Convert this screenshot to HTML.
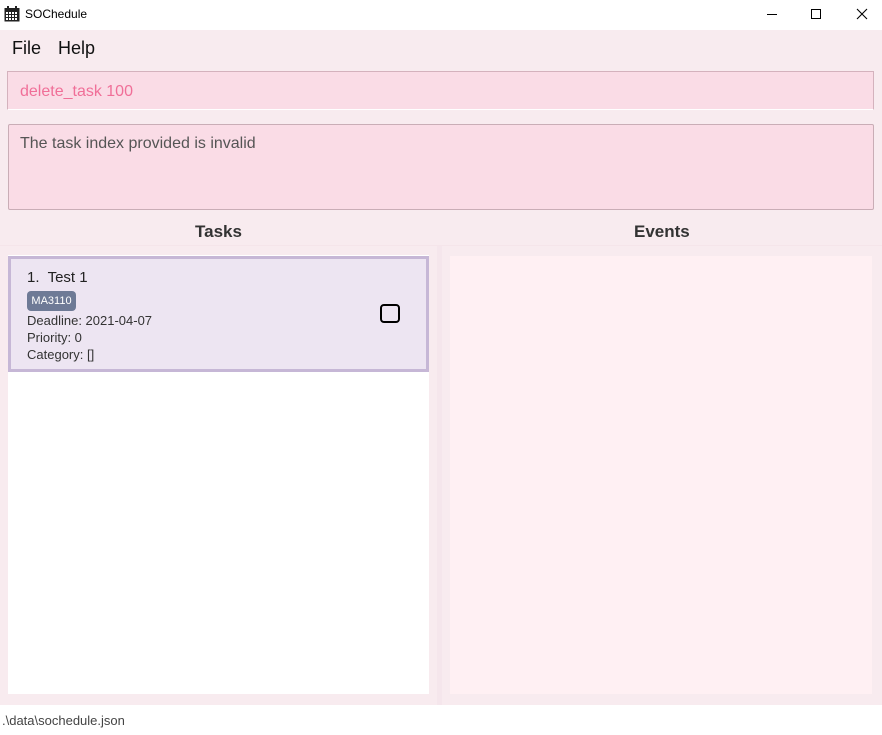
<!DOCTYPE html>
<html><head><meta charset="utf-8"><style>
*{margin:0;padding:0;box-sizing:border-box}
body{width:882px;height:735px;position:relative;background:#fff;font-family:"Liberation Sans",sans-serif;overflow:hidden}
.a{position:absolute}
</style></head><body>
<div class="a" style="left:0;top:0;width:882px;height:30px;background:#fff"></div>
<svg class="a" style="left:4px;top:6px" width="16" height="16" viewBox="0 0 16 16"><rect x="0.5" y="2" width="15" height="13.5" fill="#222"/><rect x="3" y="0" width="2" height="4" fill="#222"/><rect x="11" y="0" width="2" height="4" fill="#222"/><g fill="#fff"><rect x="2" y="6" width="2" height="2"/><rect x="5" y="6" width="2" height="2"/><rect x="8" y="6" width="2" height="2"/><rect x="11" y="6" width="2" height="2"/><rect x="2" y="9" width="2" height="2"/><rect x="5" y="9" width="2" height="2"/><rect x="8" y="9" width="2" height="2"/><rect x="11" y="9" width="2" height="2"/><rect x="2" y="12" width="2" height="2"/><rect x="5" y="12" width="2" height="2"/><rect x="8" y="12" width="2" height="2"/><rect x="11" y="12" width="2" height="2"/></g></svg>
<div class="a" style="left:25px;top:7px;font-size:12px;color:#000">SOChedule</div>
<div class="a" style="left:767px;top:14px;width:10px;height:1px;background:#000"></div>
<div class="a" style="left:811px;top:9px;width:10px;height:10px;border:1px solid #000"></div>
<svg class="a" style="left:856px;top:8px" width="12" height="12"><path d="M1 1L11 11M11 1L1 11" stroke="#000" stroke-width="1.1"/></svg>
<div class="a" style="left:0;top:30px;width:882px;height:675px;background:#f8ebef"></div>
<div class="a" style="left:12px;top:38px;font-size:18px;color:#111">File</div>
<div class="a" style="left:58px;top:38px;font-size:18px;color:#111">Help</div>
<div class="a" style="left:7px;top:71px;width:867px;height:39px;background:#fadce6;border:1px solid #d4b2bd;border-bottom:1px solid #fff"></div>
<div class="a" style="left:20px;top:83px;font-size:16px;color:#f06f98">delete_task 100</div>
<div class="a" style="left:8px;top:124px;width:866px;height:86px;background:#fadce6;border:1px solid #c9adb6;border-radius:2px"></div>
<div class="a" style="left:20px;top:135px;font-size:16px;color:#555">The task index provided is invalid</div>
<div class="a" style="left:0;top:245px;width:882px;height:1px;background:#f5e5ea"></div>
<div class="a" style="left:195px;top:222px;font-size:17px;font-weight:bold;color:#333">Tasks</div>
<div class="a" style="left:634px;top:222px;font-size:17px;font-weight:bold;color:#333">Events</div>
<div class="a" style="left:437px;top:246px;width:5px;height:459px;background:#f5e6ec"></div>
<div class="a" style="left:8px;top:255px;width:421px;height:439px;background:#fff"></div>
<div class="a" style="left:8px;top:256px;width:421px;height:116px;background:#ede5f2;border:3px solid #c6b7d6"></div>
<div class="a" style="left:27px;top:269px;font-size:15px;color:#222">1.&nbsp; Test 1</div>
<div class="a" style="left:27px;top:291px;width:49px;height:20px;background:#6e7a96;border-radius:4px;color:#fff;font-size:11px;line-height:20px;text-align:center">MA3110</div>
<div class="a" style="left:27px;top:312px;font-size:13px;color:#333;line-height:17px">Deadline: 2021-04-07<br>Priority: 0<br>Category: []</div>
<div class="a" style="left:380px;top:304px;width:20px;height:19px;border:2px solid #000;border-radius:4px"></div>
<div class="a" style="left:450px;top:256px;width:422px;height:438px;background:#fff0f3"></div>
<div class="a" style="left:2px;top:713px;font-size:13px;color:#444">.\data\sochedule.json</div>
</body></html>
